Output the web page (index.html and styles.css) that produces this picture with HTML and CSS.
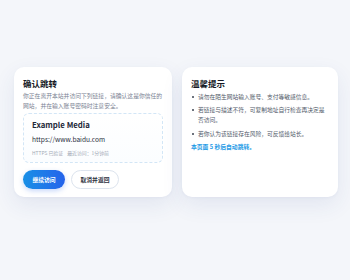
FILE: index.html
```html
<!DOCTYPE html>
<html lang="zh-CN">
<head>
<meta charset="utf-8">
<link rel="stylesheet" href="styles.css">
</head>
<body>
<main class="wrap">
  <section class="card">
    <h1 class="title">确认跳转</h1>
    <p class="desc">你正在离开本站并访问下列链接，请确认这是你信任的网站，并在输入账号密码时注意安全。</p>
    <div class="site">
      <div class="site-name">Example Media</div>
      <div class="site-url">https://www.baidu.com</div>
      <div class="site-meta"><span>HTTPS 已验证</span><span>最近访问：1分钟前</span></div>
    </div>
    <div class="actions">
      <button class="btn btn-primary">继续访问</button>
      <button class="btn btn-ghost">取消并返回</button>
    </div>
  </section>
  <section class="card">
    <h2 class="title">温馨提示</h2>
    <ul class="tips">
      <li>请勿在陌生网站输入账号、支付等敏感信息。</li>
      <li>若链接与描述不符，可复制地址自行检查再决定是否访问。</li>
      <li>若你认为该链接存在风险，可反馈给站长。</li>
    </ul>
    <p class="countdown">本页面 5 秒后自动跳转。</p>
  </section>
</main>
</body>
</html>
```
FILE: styles.css
```css
* { box-sizing: border-box; }
html, body { margin: 0; }
body {
  background: #f4f6fa;
  font-family: "Noto Sans CJK SC", "Noto Sans", sans-serif;
  color: #1f2433;
  height: 280px;
}
.wrap {
  display: grid;
  grid-template-columns: 158px 156px;
  gap: 10px;
  padding: 67px 12px 0 14px;
  align-items: stretch;
}
.card {
  background: #fff;
  border-radius: 10px;
  padding: 10px 9px 8px 9px;
  box-shadow: 0 8px 22px rgba(40, 70, 140, 0.09), 0 1px 3px rgba(40, 70, 140, 0.04);
}
.title {
  margin: 0;
  font-size: 8.5px;
  line-height: 12px;
  font-weight: 700;
  color: #161a26;
}
.desc {
  margin: 1.5px 0 0;
  font-size: 5.8px;
  line-height: 10.5px;
  color: #7a8293;
}
.site {
  margin-top: 1px;
  border: 1px dashed #d3e6f6;
  border-radius: 6px;
  padding: 5.5px 8px 5px;
  background: linear-gradient(180deg, #ffffff, #fbfdff);
}
.site-name {
  font-size: 7.8px;
  line-height: 11px;
  font-weight: 700;
  color: #232838;
}
.site-url {
  margin-top: 4px;
  font-size: 6.6px;
  line-height: 11px;
  color: #2a2f3d;
}
.site-meta {
  margin-top: 3.5px;
  font-size: 4.9px;
  line-height: 8px;
  color: #a3aab6;
  display: flex;
  gap: 4px;
}
.actions {
  margin-top: 7px;
  display: flex;
  gap: 6px;
}
.btn {
  height: 19px;
  border-radius: 10px;
  font-family: inherit;
  font-size: 5.8px;
  font-weight: 700;
  padding: 0;
  cursor: pointer;
}
.btn-primary {
  width: 42px;
  border: none;
  color: #fff;
  background: linear-gradient(90deg, #1990e6, #2563eb);
  box-shadow: 0 2px 5px rgba(37, 99, 235, 0.25);
}
.btn-ghost {
  width: 48px;
  border: 1px solid #dde4ee;
  color: #2d3240;
  background: #fff;
}
.tips {
  list-style: none;
  margin: 2.5px 0 0;
  padding: 0;
}
.tips li {
  position: relative;
  padding-left: 7px;
  font-size: 5.75px;
  line-height: 10.2px;
  color: #525a6a;
  margin-bottom: 3.3px;
}
.tips li::before {
  content: "";
  position: absolute;
  left: 1px;
  top: 4.1px;
  width: 2px;
  height: 2px;
  border-radius: 50%;
  background: #3d4452;
}
.countdown {
  margin: 3px 0 0;
  font-size: 5.8px;
  line-height: 10px;
  font-weight: 700;
  color: #1f9be6;
}
```
